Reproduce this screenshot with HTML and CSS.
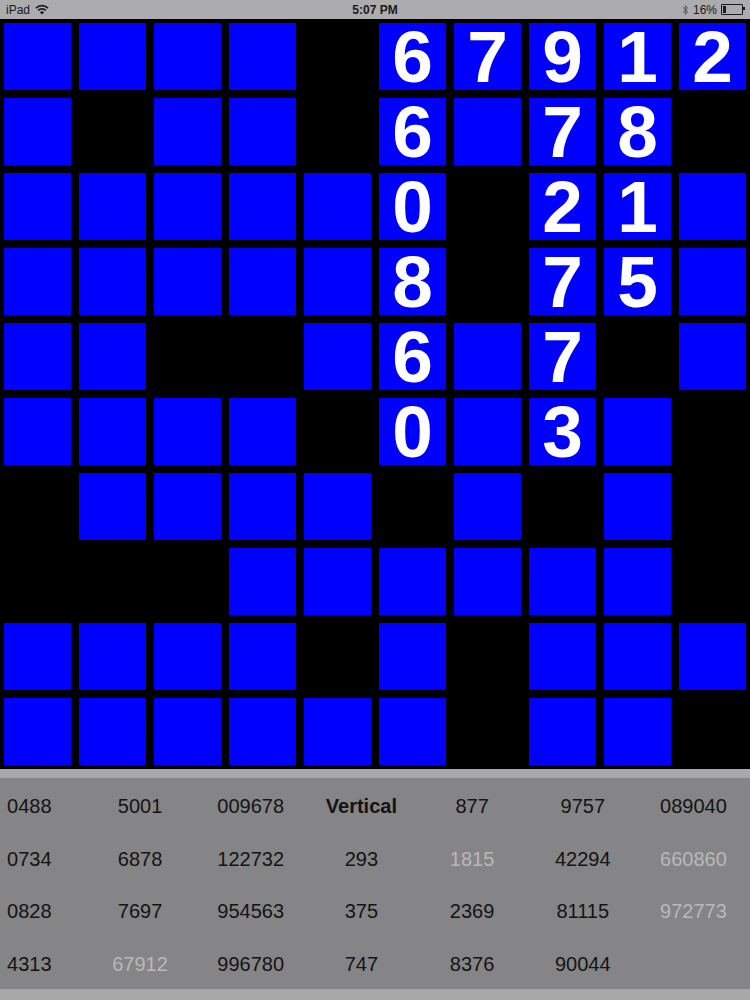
FILE: index.html
```html
<!DOCTYPE html>
<html lang="en">

<head>
    <meta charset="UTF-8">
    <meta name="viewport" content="width=device-width, initial-scale=1.0">
    <title>Number Crossword</title>
    <link rel="stylesheet" href="styles.css">
</head>

<body>
    <div class="status-bar">
        <div class="status-left">
            <span>iPad</span>
            <svg class="wifi" width="14" height="11" viewBox="0 0 14 11">
                <path d="M1 4.2 A8.5 8.5 0 0 1 13 4.2" fill="none" stroke="#1a1a1a" stroke-width="1.8"/>
                <path d="M3.2 6.4 A5.4 5.4 0 0 1 10.8 6.4" fill="none" stroke="#1a1a1a" stroke-width="1.8"/>
                <path d="M7 10.5 L4.9 8.3 A3 3 0 0 1 9.1 8.3 Z" fill="#1a1a1a"/>
            </svg>
        </div>
        <div class="status-time">5:07 PM</div>
        <div class="status-right">
            <svg class="bt" width="7" height="12" viewBox="0 0 7 12">
                <path d="M1 3.2 L5.6 8 L3.3 10.3 V1.7 L5.6 4 L1 8.8" fill="none" stroke="#555" stroke-width="1"/>
            </svg>
            <span>16%</span>
            <div class="battery"><div class="battery-level"></div></div>
        </div>
    </div>

    <div class="board" id="board"></div>

    <div class="divider"></div>

    <div class="clues" id="clues"></div>

    <div class="footer"></div>

    <script>
        // "." = black square, "#" = empty blue square, digit = filled blue square
        const rows = [
            "####.67912",
            "#.##.6#78.",
            "#####0.21#",
            "#####8.75#",
            "##..#6#7.#",
            "####.0#3#.",
            ".####.#.#.",
            "...######.",
            "####.#.###",
            "######.##."
        ];

        // "~" marks a number that is already placed on the board
        const clues = [
            ["0488", "5001", "009678", "Vertical", "877", "9757", "089040"],
            ["0734", "6878", "122732", "293", "~1815", "42294", "~660860"],
            ["0828", "7697", "954563", "375", "2369", "81115", "~972773"],
            ["4313", "~67912", "996780", "747", "8376", "90044", ""]
        ];

        const board = document.getElementById("board");
        rows.forEach(row => {
            for (const ch of row) {
                const cell = document.createElement("div");
                cell.className = ch === "." ? "cell" : "cell open";
                if (ch >= "0" && ch <= "9") cell.textContent = ch;
                board.appendChild(cell);
            }
        });

        const list = document.getElementById("clues");
        clues.forEach(row => {
            row.forEach(text => {
                const item = document.createElement("div");
                item.className = "clue";
                if (text === "Vertical") item.classList.add("heading");
                if (text.startsWith("~")) {
                    item.classList.add("used");
                    text = text.slice(1);
                }
                item.textContent = text;
                list.appendChild(item);
            });
        });
    </script>
</body>

</html>
```

FILE: styles.css
```css
body {
    margin: 0;
    padding: 0;
    width: 750px;
    height: 1000px;
    overflow: hidden;
    background: #000;
    font-family: 'Liberation Sans', Arial, sans-serif;
}

.status-bar {
    height: 19px;
    background: #acabad;
    color: #1a1a1a;
    font-size: 12px;
    display: flex;
    align-items: center;
    justify-content: space-between;
    padding: 0 7px 0 6px;
    position: relative;
}

.status-left,
.status-right {
    display: flex;
    align-items: center;
    gap: 5px;
}

.status-time {
    position: absolute;
    left: 0;
    right: 0;
    text-align: center;
    font-weight: bold;
    font-size: 12px;
}

.status-right {
    gap: 4px;
}

.battery {
    width: 18px;
    height: 7px;
    border: 1px solid #1a1a1a;
    border-radius: 1px;
    position: relative;
    display: flex;
    padding: 1px;
}

.battery::after {
    content: "";
    position: absolute;
    right: -3px;
    top: 2px;
    width: 2px;
    height: 3px;
    background: #1a1a1a;
}

.battery-level {
    width: 16%;
    background: #1a1a1a;
}

.board {
    display: grid;
    grid-template-columns: repeat(10, 67px);
    grid-auto-rows: 67px;
    gap: 8px;
    padding: 4px;
    background: #000;
}

.cell {
    display: flex;
    align-items: center;
    justify-content: center;
    color: #fff;
    font-size: 73px;
    font-weight: bold;
    line-height: 1;
}

.cell.open {
    background: #0000fe;
}

.divider {
    height: 9px;
    background: #a8a7a9;
}

/* columns are ~111px apart, the first one hangs off the left edge */
.clues {
    height: 209px;
    padding-top: 2px;
    margin-left: -26px;
    background: #858486;
    display: grid;
    grid-template-columns: repeat(7, 110.7px);
    grid-auto-rows: 52.7px;
    overflow: hidden;
}

.clue {
    display: flex;
    align-items: center;
    justify-content: center;
    font-size: 20px;
    color: #141414;
}

.clue.heading {
    font-weight: bold;
}

.clue.used {
    color: #b9b8ba;
}

.footer {
    height: 11px;
    background: #a8a7a9;
}
```
